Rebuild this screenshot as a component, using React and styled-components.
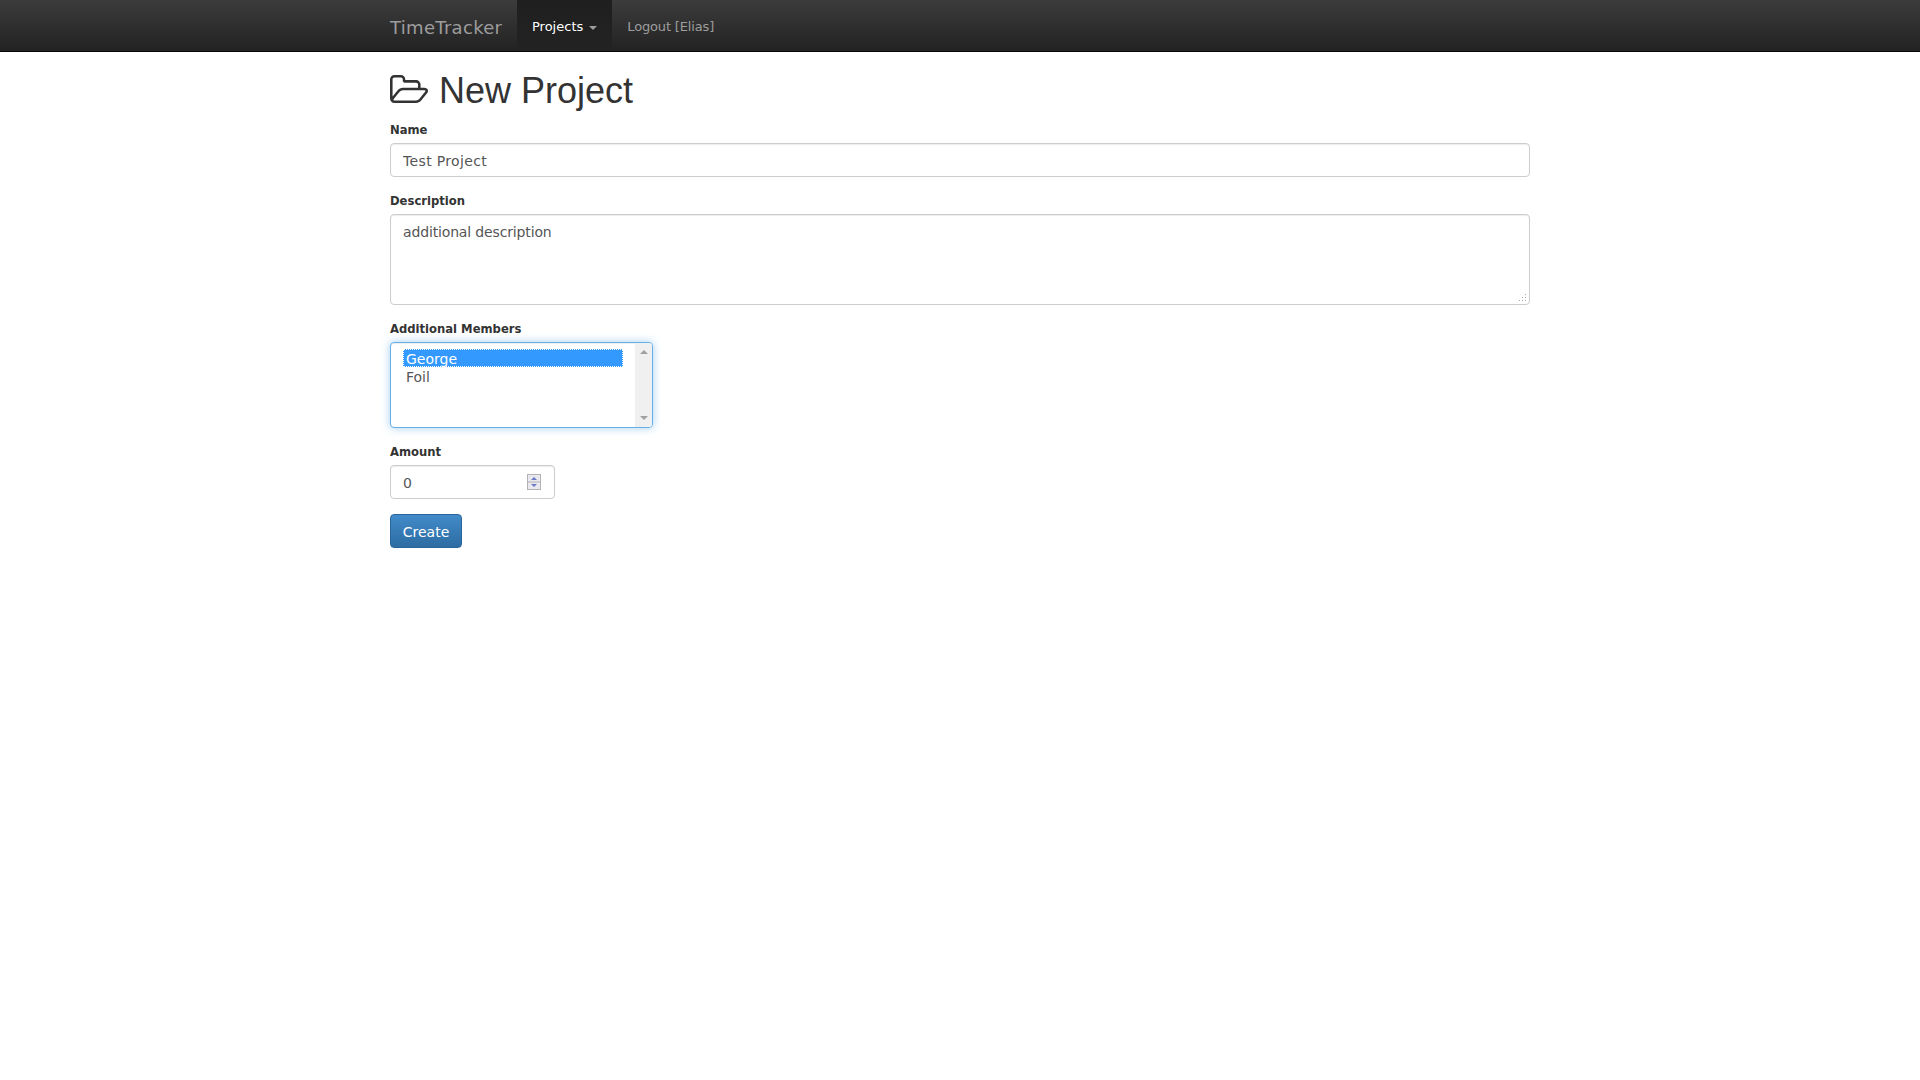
import React from "react";
import styled, { createGlobalStyle } from "styled-components";

const Global = createGlobalStyle`
  * { box-sizing: border-box; }
  html, body { margin: 0; padding: 0; background: #fff; }
  body { font-family: "DejaVu Sans", Verdana, sans-serif; font-size: 14px; line-height: 1.42857; color: #333; }
`;

const Navbar = styled.nav`
  height: 52px;
  background: linear-gradient(to bottom, #3c3c3c 0%, #222 100%);
  border-bottom: 1px solid #080808;
`;
const NavInner = styled.div`
  width: 1170px;
  margin: 0 auto;
  padding: 0 15px;
  display: flex;
  height: 51px;
`;
const Brand = styled.a`
  font-size: 18px;
  letter-spacing: 0.3px;
  color: #9d9d9d;
  line-height: 55px;
  width: 127px;
  white-space: nowrap;
`;
const NavItem = styled.a`
  display: flex;
  align-items: center;
  gap: 6px;
  padding: 3px 15px 0;
  font-size: 13px;
  letter-spacing: ${(p) => (p.$active ? "0" : "-0.15px")};
  color: ${(p) => (p.$active ? "#fff" : "#9d9d9d")};
  background: ${(p) => (p.$active ? "linear-gradient(to bottom, #1f1f1f 0%, #232323 100%)" : "transparent")};
`;
const Caret = styled.span`
  width: 0;
  height: 0;
  margin-top: 2px;
  border-top: 4px solid #9d9d9d;
  border-left: 4px solid transparent;
  border-right: 4px solid transparent;
`;
const Container = styled.main`
  width: 1170px;
  margin: 0 auto;
  padding: 0 15px;
`;
const Title = styled.h1`
  display: flex;
  align-items: center;
  gap: 11px;
  margin: 19px 0 10px;
  height: 40px;
  font: 500 36px/40px "Liberation Sans", Arial, sans-serif;
  color: #333;
`;
const FolderIcon = styled.svg`
  margin-top: -4px;
`;
const Group = styled.div`
  margin-bottom: ${(p) => p.$gap || 15}px;
`;
const Label = styled.label`
  display: block;
  font-size: 11.6px;
  font-weight: 700;
  line-height: 18px;
  margin-bottom: 4px;
  color: #333;
`;
const TextInput = styled.input`
  display: block;
  width: 100%;
  height: 34px;
  padding: 7px 12px 5px;
  font: 14px/20px "DejaVu Sans", Verdana, sans-serif;
  letter-spacing: ${(p) => p.$spacing || "0"};
  color: #555;
  background: #fff;
  border: 1px solid #ccc;
  border-radius: 4px;
  box-shadow: inset 0 1px 1px rgba(0, 0, 0, 0.075);
  outline: none;
  appearance: textfield;
  &::-webkit-inner-spin-button { display: none; }
`;
const AreaWrap = styled.div`
  position: relative;
`;
const TextArea = styled.textarea`
  display: block;
  width: 100%;
  height: 91px;
  padding: 7px 12px 5px;
  font: 14px/20px "DejaVu Sans", Verdana, sans-serif;
  letter-spacing: -0.15px;
  color: #555;
  border: 1px solid #ccc;
  border-radius: 4px;
  box-shadow: inset 0 1px 1px rgba(0, 0, 0, 0.075);
  outline: none;
  resize: none;
`;
const Grip = styled.svg`
  position: absolute;
  right: 3px;
  bottom: 3px;
`;
const ListBox = styled.div`
  display: flex;
  width: 263px;
  height: 86px;
  background: #fff;
  border: 1px solid #66afe9;
  border-radius: 4px;
  box-shadow: inset 0 1px 1px rgba(0, 0, 0, 0.075), 0 0 8px rgba(102, 175, 233, 0.6);
  overflow: hidden;
`;
const Options = styled.div`
  flex: 1;
  padding: 6px 12px;
`;
const Option = styled.div`
  height: 18px;
  padding: 0 3px;
  font-size: 14px;
  line-height: 20px;
  color: ${(p) => (p.$selected ? "#fff" : "#555")};
  background: ${(p) => (p.$selected ? "#3399ff" : "transparent")};
  outline: ${(p) => (p.$selected ? "1px dotted #fff" : "none")};
  outline-offset: -1px;
`;
const ScrollTrack = styled.div`
  width: 17px;
  background: #f0f0f0;
  display: flex;
  flex-direction: column;
  justify-content: space-between;
  align-items: center;
  padding: 7px 0;
`;
const Arrow = styled.span`
  width: 0;
  height: 0;
  border-left: 4px solid transparent;
  border-right: 4px solid transparent;
  ${(p) => (p.$up ? "border-bottom: 4px solid #a0a0a0;" : "border-top: 4px solid #a0a0a0;")}
`;
const SpinWrap = styled.div`
  position: relative;
  width: 165px;
`;
const Spinner = styled.svg`
  position: absolute;
  right: 14px;
  top: 9px;
`;
const Button = styled.button`
  display: block;
  width: 72px;
  height: 34px;
  padding: 2px 0 0;
  font: 14px/20px "DejaVu Sans", Verdana, sans-serif;
  color: #fff;
  background: linear-gradient(to bottom, #428bca 0%, #2d6ca2 100%);
  border: 1px solid #2b669a;
  border-radius: 4px;
`;

const FOLDER =
  "M1781 931q0-35-53-35h-1088q-40 0-85.5 21.5t-71.5 52.5l-294 363q-18 24-18 40 0 35 53 35h1088q40 0 86-22t71-53l294-363q18-22 18-39zm-1141-163h768v-160q0-40-28-68t-68-28h-576q-40 0-68-28t-28-68v-64q0-40-28-68t-68-28h-320q-40 0-68 28t-28 68v853l256-315q44-53 116-87.5t140-34.5zm1269 163q0 62-46 120l-295 363q-43 53-116 87.5t-140 34.5h-1088q-92 0-158-66t-66-158v-960q0-92 66-158t158-66h320q92 0 158 66t66 158v32h544q92 0 158 66t66 158v160h192q54 0 99 24.5t67 70.5q15 32 15 68z";

export default function App() {
  return (
    <>
      <Global />
      <Navbar>
        <NavInner>
          <Brand>TimeTracker</Brand>
          <NavItem $active>Projects <Caret /></NavItem>
          <NavItem>Logout [Elias]</NavItem>
        </NavInner>
      </Navbar>
      <Container>
        <Title>
          <FolderIcon width="38" height="28" viewBox="0 128 1909 1408" fill="#333">
            <path d={FOLDER} />
          </FolderIcon>
          New Project
        </Title>
        <Group>
          <Label>Name</Label>
          <TextInput defaultValue="Test Project" $spacing="0.35px" />
        </Group>
        <Group>
          <Label>Description</Label>
          <AreaWrap>
            <TextArea defaultValue="additional description" />
            <Grip width="8" height="8" viewBox="0 0 8 8" fill="#aaa">
              <rect x="6" y="0" width="1" height="1" />
              <rect x="3" y="3" width="1" height="1" />
              <rect x="6" y="3" width="1" height="1" />
              <rect x="0" y="6" width="1" height="1" />
              <rect x="3" y="6" width="1" height="1" />
              <rect x="6" y="6" width="1" height="1" />
            </Grip>
          </AreaWrap>
        </Group>
        <Group>
          <Label>Additional Members</Label>
          <ListBox role="listbox">
            <Options>
              <Option $selected>George</Option>
              <Option>Foil</Option>
            </Options>
            <ScrollTrack><Arrow $up /><Arrow /></ScrollTrack>
          </ListBox>
        </Group>
        <Group>
          <Label>Amount</Label>
          <SpinWrap>
            <TextInput type="number" defaultValue="0" />
            <Spinner width="14" height="16" viewBox="0 0 14 16">
              <rect x="0.5" y="0.5" width="13" height="15" fill="#e8e8ee" stroke="#b4b4b4" />
              <line x1="0" y1="8" x2="14" y2="8" stroke="#b4b4b4" />
              <path d="M4 6 L7 3 L10 6 Z" fill="#6a78c8" />
              <path d="M4 10 L7 13 L10 10 Z" fill="#6a78c8" />
            </Spinner>
          </SpinWrap>
        </Group>
        <Button>Create</Button>
      </Container>
    </>
  );
}
